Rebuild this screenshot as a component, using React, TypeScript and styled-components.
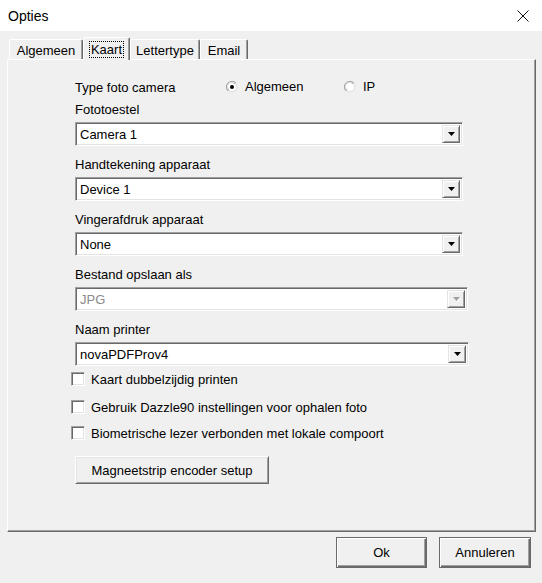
import styled, { createGlobalStyle } from "styled-components";

const GlobalStyle = createGlobalStyle`
  html, body {
    margin: 0;
    padding: 0;
    background: #f0f0f0;
  }
  body {
    font-family: "Liberation Sans", Arial, sans-serif;
    font-size: 13px;
    color: #000;
  }
`;

const Window = styled.div`
  width: 542px;
  height: 583px;
  background: #f0f0f0;
  display: flex;
  flex-direction: column;
  overflow: hidden;
`;

const TitleBar = styled.div`
  height: 31px;
  background: #fff;
  display: flex;
  align-items: center;
  justify-content: space-between;
  padding: 0 13px 0 8px;
  font-size: 14px;
`;

const DialogBody = styled.div`
  padding: 6px 6px 0 7px;
  display: flex;
  flex-direction: column;
`;

const TabStrip = styled.div`
  display: flex;
  align-items: flex-end;
  height: 22px;
  padding-left: 2px;
  position: relative;
  z-index: 1;
`;

const Tab = styled.div<{ $active?: boolean; $w: number }>`
  box-sizing: border-box;
  width: ${(p) => p.$w}px;
  height: ${(p) => (p.$active ? 23 : 20)}px;
  margin-bottom: ${(p) => (p.$active ? -1 : 0)}px;
  background: #f0f0f0;
  border-top: 1px solid #fff;
  border-left: 1px solid #fff;
  border-right: 1px solid #696969;
  box-shadow: inset -1px 0 0 #a0a0a0;
  border-radius: 2px 2px 0 0;
  display: flex;
  align-items: center;
  justify-content: center;
  padding-top: ${(p) => (p.$active ? 0 : 1)}px;
`;

const FocusText = styled.span`
  outline: 1px dotted #000;
  outline-offset: 0;
  padding: 0 1px;
  line-height: 15px;
`;

const Panel = styled.div`
  box-sizing: border-box;
  width: 529px;
  height: 473px;
  border-top: 1px solid #fff;
  border-left: 1px solid #fff;
  border-right: 1px solid #696969;
  border-bottom: 1px solid #696969;
  box-shadow: inset -1px -1px 0 #a0a0a0;
  padding: 19px 0 0 67px;
  display: flex;
  flex-direction: column;
`;

const TypeRow = styled.div`
  display: flex;
  align-items: center;
  height: 16px;
  margin-bottom: 7px;
`;

const TypeLabel = styled.span`
  width: 151px;
`;

const RadioOption = styled.label<{ $w?: number }>`
  display: flex;
  align-items: center;
  gap: 7px;
  width: ${(p) => p.$w ?? "auto"}px;
  margin-top: -1px;
`;

const Field = styled.div<{ $mb: number }>`
  display: flex;
  flex-direction: column;
  margin-bottom: ${(p) => p.$mb}px;
`;

const FieldLabel = styled.div`
  height: 16px;
  line-height: 16px;
  margin-bottom: 4px;
`;

const Combo = styled.div<{ $w: number; $disabled?: boolean }>`
  box-sizing: border-box;
  width: ${(p) => p.$w}px;
  height: 24px;
  background: #fff;
  border: 1px solid;
  border-color: #a0a0a0 #fff #fff #a0a0a0;
  box-shadow: inset 1px 1px 0 #696969, inset -1px -1px 0 #e3e3e3;
  display: flex;
  align-items: center;
  padding: 2px;
  color: ${(p) => (p.$disabled ? "#8a8a8a" : "#000")};
`;

const ComboText = styled.span`
  flex: 1;
  padding-left: 2px;
`;

const DropButton = styled.div`
  box-sizing: border-box;
  width: 18px;
  height: 100%;
  background: #f0f0f0;
  border: 1px solid;
  border-color: #e3e3e3 #696969 #696969 #e3e3e3;
  box-shadow: inset 1px 1px 0 #fff, inset -1px -1px 0 #a0a0a0;
  display: flex;
  align-items: center;
  justify-content: center;
`;

const CheckRow = styled.label<{ $mb: number }>`
  display: flex;
  align-items: center;
  gap: 6px;
  height: 16px;
  margin-left: -4px;
  margin-bottom: ${(p) => p.$mb}px;
`;

const CheckBox = styled.span`
  box-sizing: border-box;
  width: 14px;
  height: 14px;
  background: #fff;
  border: 1px solid;
  border-color: #a0a0a0 #fff #fff #a0a0a0;
  box-shadow: inset 1px 1px 0 #696969, inset -1px -1px 0 #e3e3e3;
`;

const Button = styled.button<{ $w: number; $default?: boolean }>`
  box-sizing: border-box;
  width: ${(p) => p.$w}px;
  height: ${(p) => (p.$default ? 31 : 28)}px;
  font-family: "Liberation Sans", Arial, sans-serif;
  font-size: 13px;
  color: #000;
  background: #f0f0f0;
  padding: 0;
  border: 1px solid;
  border-color: ${(p) =>
    p.$default ? "#696969" : "#fff #696969 #696969 #fff"};
  box-shadow: ${(p) =>
    p.$default
      ? "inset 1px 1px 0 #fff, inset -1px -1px 0 #696969, inset -2px -2px 0 #a0a0a0"
      : "inset 1px 1px 0 #e3e3e3, inset -1px -1px 0 #a0a0a0"};
`;

const Footer = styled.div`
  display: flex;
  justify-content: flex-end;
  gap: 12px;
  padding: 5px 5px 0 0;
`;

const Arrow = ({ disabled }: { disabled?: boolean }) => (
  <svg width="9" height="6" viewBox="0 0 9 6">
    {disabled && <polygon points="2,2 9,2 5.5,6" fill="#fff" />}
    <polygon points="1,1 8,1 4.5,5" fill={disabled ? "#a0a0a0" : "#000"} />
  </svg>
);

const Radio = ({ checked }: { checked?: boolean }) => (
  <svg width="12" height="12" viewBox="0 0 12 12">
    <circle cx="6" cy="6" r="5.5" fill="#e3e3e3" />
    <path d="M10 2 A5.5 5.5 0 0 0 2 10" stroke="#a0a0a0" strokeWidth="1" fill="none" />
    <path d="M9 3 A4.5 4.5 0 0 0 3 9" stroke="#696969" strokeWidth="1" fill="none" />
    <circle cx="6" cy="6" r="4" fill="#fff" />
    {checked && <circle cx="6" cy="6" r="2" fill="#000" />}
  </svg>
);

const CloseIcon = () => (
  <svg width="12" height="12" viewBox="0 0 12 12">
    <path d="M0.5 0.5 L11.5 11.5 M11.5 0.5 L0.5 11.5" stroke="#111" strokeWidth="1" />
  </svg>
);

type ComboField = { label: string; value: string; width: number; disabled?: boolean };

const fields: ComboField[] = [
  { label: "Fototoestel", value: "Camera 1", width: 388 },
  { label: "Handtekening apparaat", value: "Device 1", width: 388 },
  { label: "Vingerafdruk apparaat", value: "None", width: 388 },
  { label: "Bestand opslaan als", value: "JPG", width: 393, disabled: true },
  { label: "Naam printer", value: "novaPDFProv4", width: 394 },
];

const checks = [
  { text: "Kaart dubbelzijdig printen", mb: 12 },
  { text: "Gebruik Dazzle90 instellingen voor ophalen foto", mb: 10 },
  { text: "Biometrische lezer verbonden met lokale compoort", mb: 15 },
];

export default function App() {
  return (
    <Window>
      <GlobalStyle />
      <TitleBar>
        <span>Opties</span>
        <CloseIcon />
      </TitleBar>
      <DialogBody>
        <TabStrip>
          <Tab $w={74}>Algemeen</Tab>
          <Tab $w={47} $active>
            <FocusText>Kaart</FocusText>
          </Tab>
          <Tab $w={70}>Lettertype</Tab>
          <Tab $w={48}>Email</Tab>
        </TabStrip>
        <Panel>
          <TypeRow>
            <TypeLabel>Type foto camera</TypeLabel>
            <RadioOption $w={118}>
              <Radio checked />
              Algemeen
            </RadioOption>
            <RadioOption>
              <Radio />
              IP
            </RadioOption>
          </TypeRow>
          {fields.map((f, i) => (
            <Field key={f.label} $mb={i === fields.length - 1 ? 5 : 11}>
              <FieldLabel>{f.label}</FieldLabel>
              <Combo $w={f.width} $disabled={f.disabled}>
                <ComboText>{f.value}</ComboText>
                <DropButton>
                  <Arrow disabled={f.disabled} />
                </DropButton>
              </Combo>
            </Field>
          ))}
          {checks.map((c) => (
            <CheckRow key={c.text} $mb={c.mb}>
              <CheckBox />
              {c.text}
            </CheckRow>
          ))}
          <Button $w={194}>Magneetstrip encoder setup</Button>
        </Panel>
        <Footer>
          <Button $w={91} $default>
            Ok
          </Button>
          <Button $w={92} $default>
            Annuleren
          </Button>
        </Footer>
      </DialogBody>
    </Window>
  );
}
